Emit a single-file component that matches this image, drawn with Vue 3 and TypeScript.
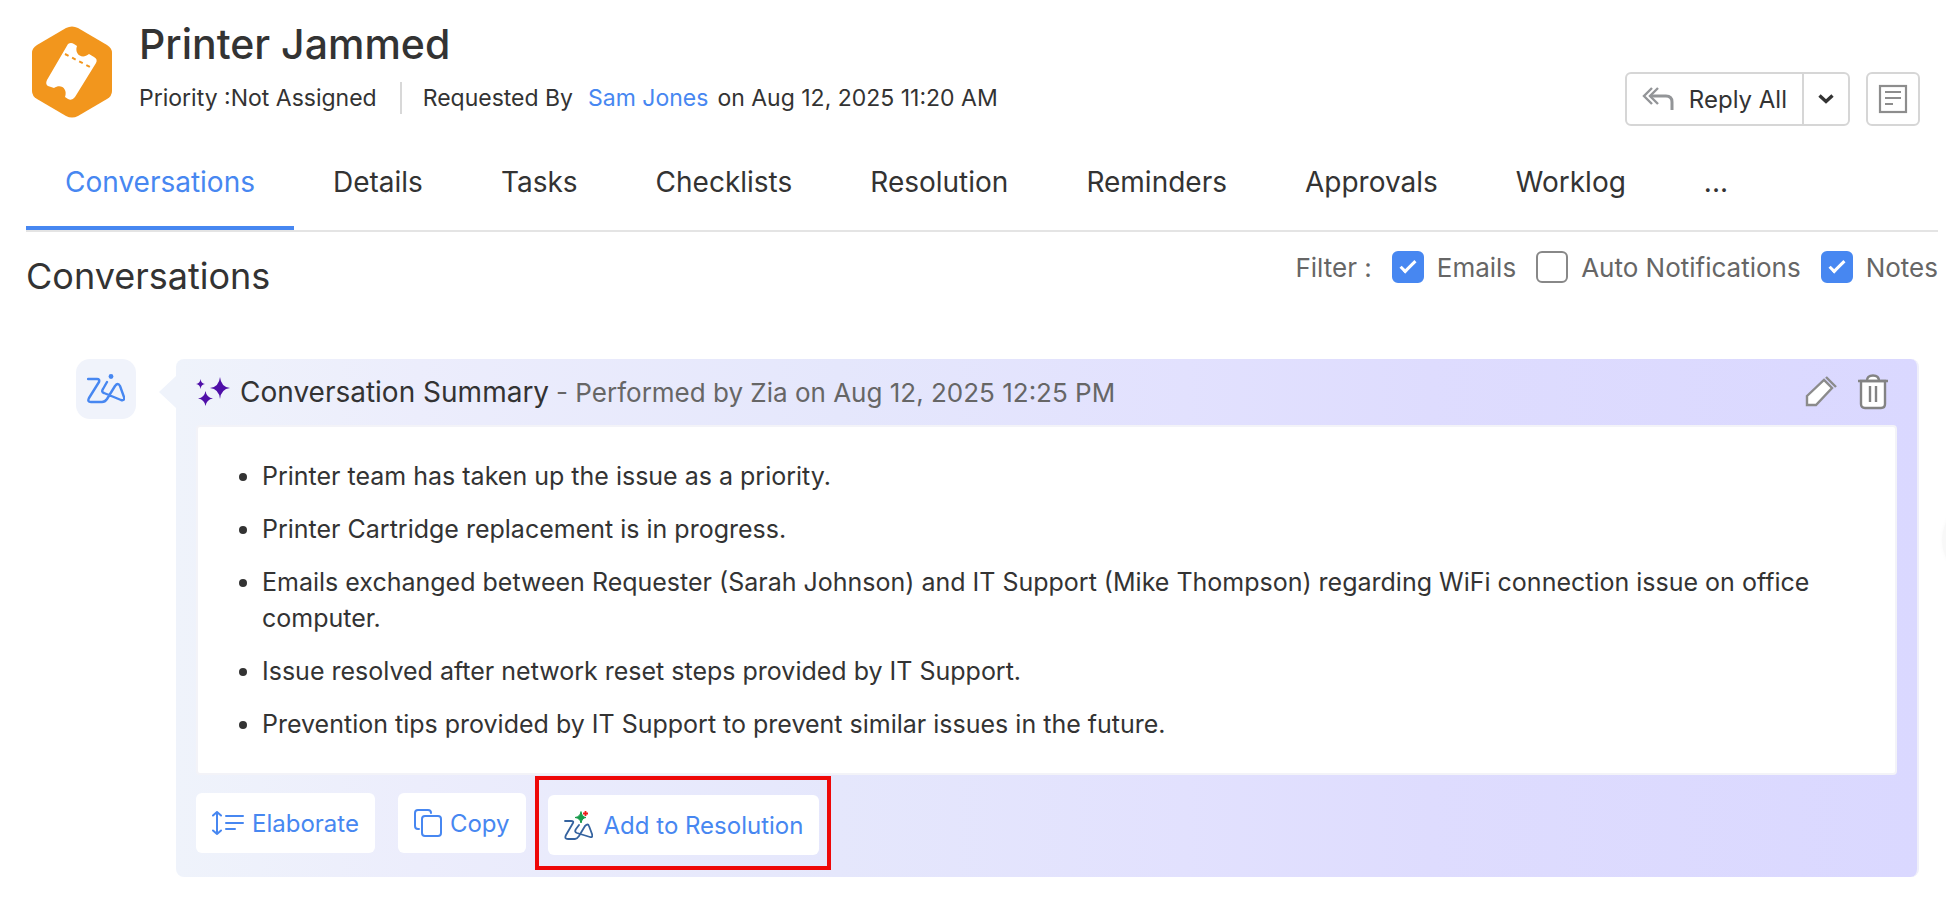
<script setup lang="ts">
import { ref } from 'vue'

interface Filter {
  id: string
  label: string
  checked: boolean
}

const tabs: string[] = [
  'Conversations',
  'Details',
  'Tasks',
  'Checklists',
  'Resolution',
  'Reminders',
  'Approvals',
  'Worklog',
  '...',
]
const activeTab = ref<string>('Conversations')

const filters = ref<Filter[]>([
  { id: 'filter-emails', label: 'Emails', checked: true },
  { id: 'filter-auto', label: 'Auto Notifications', checked: false },
  { id: 'filter-notes', label: 'Notes', checked: true },
])

const points: string[] = [
  'Printer team has taken up the issue as a priority.',
  'Printer Cartridge replacement is in progress.',
  'Emails exchanged between Requester (Sarah Johnson) and IT Support (Mike Thompson) regarding WiFi connection issue on office computer.',
  'Issue resolved after network reset steps provided by IT Support.',
  'Prevention tips provided by IT Support to prevent similar issues in the future.',
]
</script>

<template>
  <div class="page">
    <header class="header">
      <svg class="ticket" viewBox="0 0 80 92" aria-hidden="true">
        <path
          d="M34 2Q40-1 46 2L75 19Q80 22 80 27V65Q80 70 75 73L46 90Q40 93 34 90L5 73Q0 70 0 65V27Q0 22 5 19Z"
          fill="#f2961d"
        />
        <path
          d="M36 18Q39 16 42 18L45 20C42 28 50 34 57 28L62 31Q66 33 64 37L43 71Q40 75 36 73L33 71C36 63 29 57 22 62L16 60Q13 58 15 54Z"
          fill="#fff"
        />
        <path d="M33 28L60 42" stroke="#f2961d" stroke-width="2" stroke-dasharray="4 4" />
      </svg>
      <div class="heading">
        <h1>Printer Jammed</h1>
        <div class="meta">
          <span>Priority :Not Assigned</span>
          <span class="divider"></span>
          <span>Requested By</span>
          <a href="#requester">Sam Jones</a>
          <span>on Aug 12, 2025 11:20 AM</span>
        </div>
      </div>
      <div class="actions">
        <div class="split">
          <button type="button" class="reply">
            <svg width="32" height="24" viewBox="0 0 32 24" fill="none" stroke="#939598" stroke-width="3" aria-hidden="true">
              <path d="M10 1L2 9L10 17M16 1L8 9L16 17" stroke-width="2.4" />
              <path d="M9 9H24Q30 9 30 15V23" />
            </svg>
            Reply All
          </button>
          <button type="button" class="more" aria-label="More reply options">
            <svg width="16" height="10" viewBox="0 0 16 10" fill="none" stroke="#333" stroke-width="3.4" aria-hidden="true">
              <path d="M1.500 1.500L8 7.500L14.500 1.500" />
            </svg>
          </button>
        </div>
        <button type="button" class="note" aria-label="Notes">
          <svg width="30" height="30" viewBox="0 0 30 30" fill="none" stroke="#8d8d8d" stroke-width="2.2" aria-hidden="true">
            <rect x="2" y="2" width="26" height="26" />
            <path d="M7 8H23M7 14H23M7 20H15" />
          </svg>
        </button>
      </div>
    </header>

    <nav class="tabs">
      <button
        v-for="tab in tabs"
        :key="tab"
        type="button"
        class="tab"
        :class="{ active: tab === activeTab }"
        @click="activeTab = tab"
      >
        {{ tab }}
      </button>
    </nav>

    <div class="toolbar">
      <h2>Conversations</h2>
      <div class="filters">
        <span>Filter :</span>
        <span v-for="filter in filters" :key="filter.id" class="filter">
          <input :id="filter.id" v-model="filter.checked" type="checkbox" />
          <label :for="filter.id">{{ filter.label }}</label>
        </span>
      </div>
    </div>

    <main class="thread">
      <div class="avatar">
        <svg width="38" height="30" viewBox="0 0 38 30" fill="none" stroke="#4787f1" stroke-width="2.4" stroke-linejoin="round" stroke-linecap="round" aria-hidden="true">
          <path d="M1 5H10Q13 5 12 8L2 24Q0 28 4 28H15Q18 28 20 25L28 12Q31 8 33 12L37 23Q38 27 34 26L17 19Q14 18 16 15L20 8" />
          <circle cx="24" cy="2.500" r="2.400" fill="#4787f1" stroke="none" />
        </svg>
      </div>
      <section class="card">
        <div class="card-head">
          <svg width="34" height="30" viewBox="0 0 34 30" fill="#4f0fa8" aria-hidden="true">
            <path d="M24 0Q25 10 34 11Q25 12 24 22Q23 12 14 11Q23 10 24 0Z" />
            <path d="M9.500 14Q10.500 20.500 17 21.500Q10.500 22.500 9.500 29Q8.500 22.500 2 21.500Q8.500 20.500 9.500 14Z" />
            <path d="M4.500 2Q5 6.500 9 7Q5 7.500 4.500 12Q4 7.500 0 7Q4 6.500 4.500 2Z" />
          </svg>
          <h3>Conversation Summary</h3>
          <span class="by">- Performed by Zia on Aug 12, 2025 12:25 PM</span>
          <div class="tools">
            <button type="button" aria-label="Edit summary">
              <svg width="32" height="32" viewBox="0 0 32 32" fill="#fff" stroke="#8b8b8b" stroke-width="2.400" aria-hidden="true">
                <path d="M2 20L19 4L27 12L11 29H2Z" />
                <path d="M21 1L31 11" fill="none" />
              </svg>
            </button>
            <button type="button" aria-label="Delete summary">
              <svg width="30" height="36" viewBox="0 0 30 36" fill="#fff" stroke="#838383" stroke-width="2.400" aria-hidden="true">
                <path d="M9 7Q9 1.500 15 1.500Q21 1.500 21 7" />
                <path d="M3 7H27V30Q27 34 23 34H7Q3 34 3 30Z" />
                <path d="M0 7H30M12 12V28M18 12V28" />
              </svg>
            </button>
          </div>
        </div>
        <div class="summary">
          <ul>
            <li v-for="point in points" :key="point">{{ point }}</li>
          </ul>
        </div>
        <div class="card-actions">
          <button type="button" class="action">
            <svg width="32" height="24" viewBox="0 0 32 24" fill="none" stroke="#4787f1" stroke-width="2" stroke-linecap="round" stroke-linejoin="round" aria-hidden="true">
              <path d="M5 1V23M1 4.500L5 1L9 4.500M1 19.500L5 23L9 19.500" />
              <path d="M14 5H31M14 12H31M14 18H23" />
            </svg>
            Elaborate
          </button>
          <button type="button" class="action">
            <svg width="28" height="28" viewBox="0 0 28 28" fill="none" stroke="#4787f1" stroke-width="2" stroke-linecap="round" aria-hidden="true">
              <path d="M5 20H4Q1 20 1 17V4Q1 1 4 1H14Q17 1 17 4" />
              <rect x="8" y="7" width="19" height="20" rx="3" />
            </svg>
            Copy
          </button>
          <div class="highlight">
            <button type="button" class="action resolution">
              <svg width="29" height="29" viewBox="0 0 29 29" fill="none" stroke="#35639f" stroke-width="1.800" stroke-linejoin="round" stroke-linecap="round" aria-hidden="true">
                <path d="M1 10H7Q10 10 9 12L2 24Q0 28 4 28H11Q13 28 15 25L21 15Q24 12 25 15L28 23Q29 27 26 26L13 22Q10 21 12 18L15 14" />
                <path d="M17 1Q18 6 22 6.500Q18 7 17 12Q16 7 11 6.500Q16 6 17 1Z" fill="#189b4b" stroke="#189b4b" stroke-width="1" />
                <path d="M21.500 0V5M19 2.500H24" stroke="#ee1c1c" stroke-linecap="butt" />
              </svg>
              Add to Resolution
            </button>
          </div>
        </div>
      </section>
    </main>
    <div class="edge-handle"></div>
  </div>
</template>

<style>
body {
  margin: 0;
  background: #fff;
}
</style>

<style scoped>
.page {
  position: relative;
  overflow: hidden;
  padding: 0 8px 24px 26px;
  color: #333;
  font-family: Inter, 'Open Sans', sans-serif;
  font-size: 24px;
}

h1,
h2,
h3,
ul {
  margin: 0;
  padding: 0;
  font-weight: 400;
}

button {
  padding: 0;
  border: 0;
  background: none;
  color: inherit;
  font: inherit;
  cursor: pointer;
}

svg {
  display: block;
  flex: none;
}

.header {
  display: flex;
  align-items: flex-start;
  padding: 18px 18px 0 6px;
}

.ticket {
  width: 80px;
  height: 92px;
  margin-top: 8px;
}

.heading {
  flex: 1;
  margin-left: 27px;
}

h1 {
  font-size: 41px;
  font-weight: 500;
  line-height: 52px;
}

.meta {
  display: flex;
  align-items: center;
  margin-top: 12px;
  font-size: 23px;
  line-height: 32px;
}

.divider {
  width: 2px;
  height: 32px;
  margin: 0 21px 0 23px;
  background: #d8d8d8;
}

.meta a {
  margin: 0 9px 0 15px;
  color: #4787f1;
  text-decoration: none;
}

.actions {
  display: flex;
  gap: 16px;
  margin-top: 54px;
}

.split,
.note {
  box-sizing: border-box;
  height: 54px;
  border: 2px solid #d6d6d6;
  border-radius: 6px;
}

.split {
  display: flex;
}

.reply {
  display: flex;
  align-items: center;
  gap: 15px;
  padding: 0 15px;
}

.more {
  display: grid;
  place-items: center;
  width: 46px;
  border-left: 2px solid #d6d6d6;
}

.note {
  display: grid;
  place-items: center;
  width: 54px;
}

.tabs {
  display: flex;
  height: 104px;
  border-bottom: 2px solid #e4e4e4;
}

.tab {
  padding: 16px 39px 4px;
  border-bottom: 4px solid transparent;
  font-size: 28px;
}

.tab.active {
  border-color: #4787f1;
  color: #4787f1;
}

.toolbar {
  display: flex;
  justify-content: space-between;
  height: 127px;
}

h2 {
  margin-top: 22px;
  font-size: 36px;
  line-height: 44px;
}

.filters {
  display: flex;
  gap: 20px;
  align-items: center;
  height: 32px;
  margin-top: 19px;
  color: #666;
  font-size: 26px;
}

.filter {
  display: flex;
  gap: 13px;
  align-items: center;
}

.filter input {
  display: grid;
  place-items: center;
  box-sizing: border-box;
  width: 32px;
  height: 32px;
  margin: 0;
  border: 2px solid #888;
  border-radius: 6px;
  appearance: none;
}

.filter input:checked {
  border-color: #4787f1;
  background: #4787f1;
}

.filter input:checked::after {
  width: 13px;
  height: 5px;
  margin-bottom: 4px;
  border: solid #fff;
  border-width: 0 0 3px 3px;
  content: '';
  rotate: -45deg;
}

.thread {
  display: flex;
  gap: 40px;
  align-items: flex-start;
  padding: 0 19px 0 50px;
}

.avatar {
  display: grid;
  flex: none;
  place-items: center;
  width: 60px;
  height: 60px;
  border-radius: 14px;
  background: #f0f3fb;
}

.card {
  position: relative;
  flex: 1;
  padding: 0 20px 7px;
  border-right: 2px solid #efeffa;
  border-radius: 8px;
  background: linear-gradient(90deg, #eff3fb 0%, #ecedfc 14%, #e5e7fc 38%, #e2e1fe 58%, #dedcfe 72%, #dad8ff 100%);
}

.card::before {
  position: absolute;
  top: 17px;
  left: -17px;
  width: 17px;
  height: 32px;
  background: #eff3fb;
  clip-path: polygon(100% 0, 100% 100%, 0 50%);
  content: '';
}

.card-head {
  display: flex;
  align-items: center;
  height: 66px;
}

h3 {
  margin-left: 10px;
  font-size: 28px;
}

.by {
  margin-left: 7px;
  color: #666;
  font-size: 26px;
}

.tools {
  display: flex;
  gap: 21px;
  align-items: center;
  margin-left: auto;
  padding-right: 9px;
}

.summary {
  padding: 31px 40px 31px 64px;
  border: 2px solid #f3f3f8;
  border-radius: 4px;
  background: #fff;
}

ul {
  display: grid;
  gap: 17px;
  font-size: 25px;
  line-height: 36px;
  list-style: none;
}

li {
  position: relative;
}

li::before {
  position: absolute;
  top: 15px;
  left: -23px;
  width: 8px;
  height: 8px;
  border-radius: 50%;
  background: #333;
  content: '';
}

.card-actions {
  display: flex;
  align-items: center;
  margin-top: 1px;
}

.action {
  display: flex;
  gap: 8px;
  align-items: center;
  height: 60px;
  margin-right: 23px;
  padding: 0 16px;
  border-radius: 6px;
  background: #fff;
  color: #4787f1;
}

.highlight {
  margin-left: -14px;
  padding: 15px 8px 11px 9px;
  border: 4px solid #ee0808;
}

.resolution {
  gap: 11px;
  margin: 0;
}

.edge-handle {
  position: absolute;
  top: 500px;
  right: -76px;
  width: 80px;
  height: 80px;
  border-radius: 50%;
  background: #f8f8f8;
  box-shadow: 0 0 4px #f8f8f8;
}
</style>
